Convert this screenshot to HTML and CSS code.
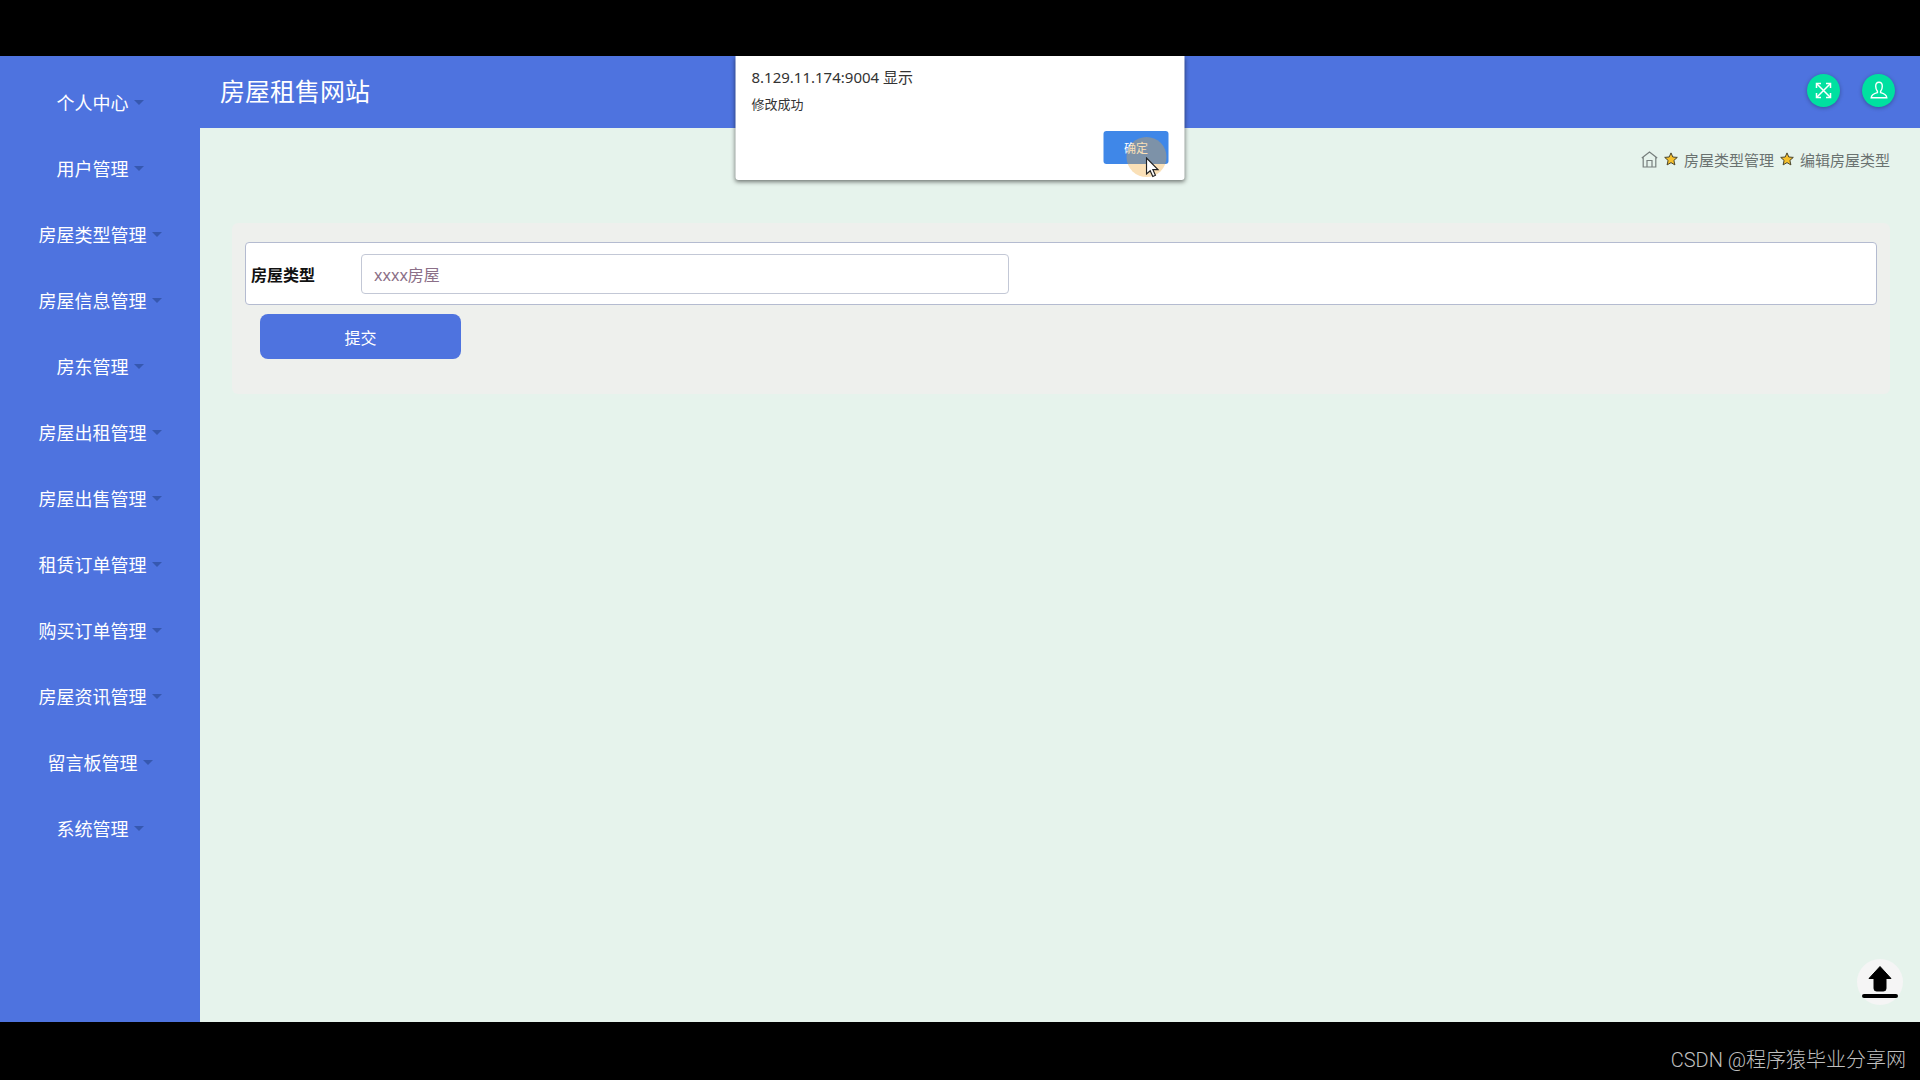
FILE: index.html
```html
<!DOCTYPE html>
<html lang="zh-CN">

<head>
    <meta charset="UTF-8">
    <meta name="viewport" content="width=device-width, initial-scale=1.0">
    <title>房屋租售网站</title>
    <link rel="stylesheet" href="styles.css">
</head>

<body>

<div class="screen">
    <!-- 左侧菜单 -->
    <nav class="sidebar">
        <ul class="menu">
            <li><a class="menu-link" href="#">个人中心</a></li>
            <li><a class="menu-link" href="#">用户管理</a></li>
            <li><a class="menu-link" href="#">房屋类型管理</a></li>
            <li><a class="menu-link" href="#">房屋信息管理</a></li>
            <li><a class="menu-link" href="#">房东管理</a></li>
            <li><a class="menu-link" href="#">房屋出租管理</a></li>
            <li><a class="menu-link" href="#">房屋出售管理</a></li>
            <li><a class="menu-link" href="#">租赁订单管理</a></li>
            <li><a class="menu-link" href="#">购买订单管理</a></li>
            <li><a class="menu-link" href="#">房屋资讯管理</a></li>
            <li><a class="menu-link" href="#">留言板管理</a></li>
            <li><a class="menu-link" href="#">系统管理</a></li>
        </ul>
    </nav>

    <div class="page">
        <header class="header">
            <h1 class="title">房屋租售网站</h1>
            <div class="tools">
                <button type="button" class="tool" aria-label="全屏">
                    <svg width="17" height="17" viewBox="0 0 17 17" fill="none" stroke="#fff" stroke-width="1.5">
                        <path d="M2 2l13 13M15 2L2 15"/>
                        <path d="M1.5 6V1.5H6M11 1.5h4.500V6M15.500 11v4.500H11M6 15.500H1.500V11"/>
                    </svg>
                </button>
                <button type="button" class="tool" aria-label="用户">
                    <svg width="18" height="18" viewBox="0 0 18 18" fill="none" stroke="#fff" stroke-width="1.400">
                        <path d="M7.400 10.200C6.300 9 5.700 7.300 5.700 5.300C5.700 2.700 7 1.300 9 1.300s3.300 1.400 3.300 4c0 2-.5 3.700-1.700 4.900v1.400c3.300.9 5.900 2 6.200 5.100H1.200c.3-3.100 2.900-4.200 6.200-5.100z"/>
                    </svg>
                </button>
            </div>
        </header>

        <main class="content">
            <nav class="breadcrumb">
                <a href="#" aria-label="首页">
                    <svg width="17" height="17" viewBox="0 0 17 17" fill="none" stroke="#777f7d" stroke-width="1.200">
                        <path d="M.8 7L8.500 1l7.700 6M2.200 6v10h12.600V6M6 16V9.500h5V16"/>
                    </svg>
                </a>
                <svg class="star" width="14" height="14" viewBox="0 0 14 14">
                    <path d="M7 .9l1.800 4.100 4.500.4-3.400 3 1 4.500L7 10.600l-3.900 2.300 1-4.500-3.400-3 4.500-.4z"/>
                </svg>
                <a href="#">房屋类型管理</a>
                <svg class="star" width="14" height="14" viewBox="0 0 14 14">
                    <path d="M7 .9l1.800 4.100 4.500.4-3.400 3 1 4.500L7 10.600l-3.900 2.300 1-4.500-3.400-3 4.500-.4z"/>
                </svg>
                <a href="#">编辑房屋类型</a>
            </nav>

            <form class="card">
                <div class="field">
                    <label for="houseType">房屋类型</label>
                    <input type="text" id="houseType" name="fangwuleixing" value="xxxx房屋">
                </div>
                <button type="button" class="submit">提交</button>
            </form>
        </main>
    </div>

    <!-- 提示框 -->
    <div class="alert" role="alertdialog" aria-labelledby="alertTitle">
        <h2 class="alert-title" id="alertTitle">8.129.11.174:9004 显示</h2>
        <p class="alert-text">修改成功</p>
        <button type="button" class="alert-ok">确定
            <span class="halo"></span>
            <svg class="cursor" width="14" height="21" viewBox="0 0 14 21">
                <path d="M1 1v16l3.700-3.300 2.600 5.800 2.600-1.200-2.500-5.600H12.500z" fill="#fff" stroke="#222" stroke-width="1.200"/>
            </svg>
        </button>
    </div>

    <button type="button" class="to-top" aria-label="回到顶部">
        <svg width="36" height="34" viewBox="0 0 36 34">
            <path d="M18 1.500L29 13.500H24V23.500Q24 26 21.500 26H14.500Q12 26 12 23.500V13.500H7z" stroke="#000" stroke-linejoin="round"/>
            <rect x="0" y="29" width="36" height="4" rx="2"/>
        </svg>
    </button>
</div>

<footer class="watermark">CSDN @程序猿毕业分享网</footer>

</body>

</html>
```
FILE: styles.css
```css
* {
    box-sizing: border-box;
}

body {
    display: flex;
    flex-direction: column;
    min-height: 100vh;
    margin: 0;
    padding-top: 56px;
    background: #000;
    font-family: "Noto Sans", "Noto Sans CJK SC", sans-serif;
    font-size: 16px;
}

a {
    color: inherit;
    text-decoration: none;
}

button,
input {
    font: inherit;
}

button {
    border: none;
    padding: 0;
    cursor: pointer;
}

svg {
    display: block;
}

.screen {
    position: relative;
    display: flex;
    flex: 1;
    background: #e6f3ec;
}

/* 左侧菜单 */
.sidebar {
    width: 200px;
    background: #4e73df;
}

.menu {
    margin: 0;
    padding: 13px 0;
    list-style: none;
}

.menu-link {
    display: flex;
    align-items: center;
    justify-content: center;
    gap: 5px;
    height: 66px;
    color: #fff;
    font-size: 18px;
}

.menu-link::after {
    content: "";
    border: 5px solid transparent;
    border-top-color: #3658b0;
    border-bottom: 0;
}

/* 顶部 */
.page {
    flex: 1;
    min-width: 0;
}

.header {
    display: flex;
    align-items: center;
    justify-content: space-between;
    height: 72px;
    padding: 0 25px 4px 20px;
    background: #4e73df;
}

.title {
    margin: 0;
    color: #fff;
    font-size: 25px;
    font-weight: 400;
}

.tools {
    display: flex;
    gap: 22px;
}

.tool {
    display: flex;
    align-items: center;
    justify-content: center;
    width: 33px;
    height: 33px;
    border-radius: 50%;
    background: #00e0a0;
    box-shadow: 0 1px 4px rgba(0, 0, 0, 0.3);
}

/* 内容 */
.content {
    padding: 19px 30px 20px 32px;
}

.breadcrumb {
    display: flex;
    align-items: center;
    justify-content: flex-end;
    gap: 6px;
    height: 24px;
    margin-bottom: 52px;
    color: #6a7270;
    font-size: 15px;
}

.star {
    fill: #f5c02c;
    stroke: #4a452c;
    stroke-width: 1;
}

.card {
    height: 171px;
    padding: 19px 13px 35px 13px;
    border-radius: 6px;
    background: #eef0ed;
}

.field {
    display: flex;
    align-items: center;
    height: 63px;
    padding: 0 5px;
    border: 1px solid #b4bbd0;
    border-radius: 4px;
    background: #fff;
}

.field label {
    width: 110px;
    color: #111;
    font-weight: 700;
}

.field input {
    width: 40%;
    height: 40px;
    padding: 0 12px;
    border: 1px solid #c3c8d6;
    border-radius: 4px;
    background: #fff;
    color: #8b6f88;
}

.submit {
    display: block;
    width: 201px;
    height: 45px;
    margin: 9px 0 0 15px;
    border-radius: 8px;
    background: #4e73df;
    color: #fff;
}

/* 提示框 */
.alert {
    position: absolute;
    top: 0;
    left: 50%;
    display: flex;
    flex-direction: column;
    width: 449px;
    padding: 9px 16px 16px;
    transform: translateX(-50%);
    border-radius: 0 0 3px 3px;
    background: #fff;
    box-shadow: 0 2px 4px rgba(0, 0, 0, 0.5);
    color: #333;
}

.alert-title {
    margin: 0;
    font-size: 15px;
    font-weight: 400;
    line-height: 24px;
}

.alert-text {
    margin: 5px 0 17px;
    font-size: 13px;
    line-height: 20px;
}

.alert-ok {
    position: relative;
    align-self: flex-end;
    width: 65px;
    height: 33px;
    border-radius: 3px;
    background: #3f87e8;
    color: #fff;
    font-size: 12px;
}

.halo {
    position: absolute;
    top: 6px;
    left: 23px;
    width: 40px;
    height: 40px;
    border-radius: 50%;
    background: rgba(240, 165, 50, 0.35);
}

.cursor {
    position: absolute;
    top: 26px;
    left: 42px;
}

/* 回到顶部 */
.to-top {
    position: absolute;
    right: 17px;
    bottom: 17px;
    display: flex;
    align-items: center;
    justify-content: center;
    width: 46px;
    height: 46px;
    border-radius: 50%;
    background: #f5f5f5;
}

.watermark {
    height: 58px;
    padding: 10px 14px 0;
    color: #c0c0c0;
    font-family: Roboto, "Noto Sans CJK SC", sans-serif;
    font-size: 20px;
    font-weight: 300;
    line-height: 58px;
    line-height: 56px;
    text-align: right;
}
```
